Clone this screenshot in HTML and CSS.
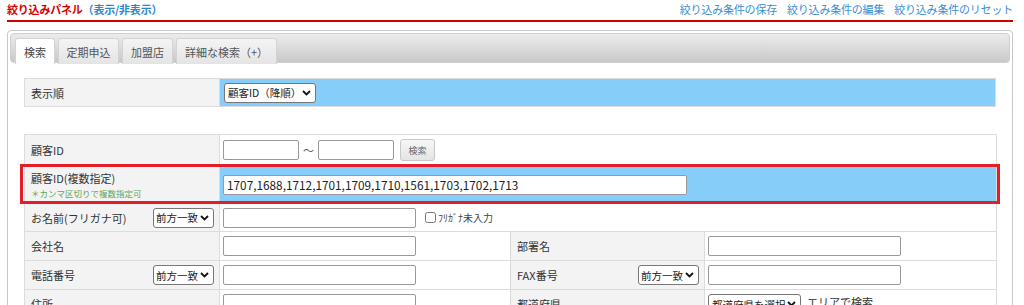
FILE: index.html
```html
<!DOCTYPE html>
<html lang="ja">
<head>
<meta charset="utf-8">
<title>絞り込みパネル</title>
<link rel="stylesheet" href="styles.css">
</head>
<body>
<header class="top">
  <div class="title">絞り込みパネル<span class="toggle">（表示/非表示）</span></div>
  <nav class="links">
    <a>絞り込み条件の保存</a>
    <a>絞り込み条件の編集</a>
    <a>絞り込み条件のリセット</a>
  </nav>
</header>
<div class="panel">
  <ul class="tabs">
    <li class="tab active w1">検索</li>
    <li class="tab w2">定期申込</li>
    <li class="tab w3">加盟店</li>
    <li class="tab w4">詳細な検索（+）</li>
  </ul>
  <div class="tab-body">
    <table class="t1">
      <tr>
        <th class="lab">表示順</th>
        <td class="blue"><select class="sel sort"><option>顧客ID（降順）</option></select></td>
      </tr>
    </table>
    <div class="t2wrap">
      <table class="t2">
        <colgroup><col class="c1"><col class="c2"><col class="c3"><col class="c4"></colgroup>
        <tr class="r1">
          <th class="lab">顧客ID</th>
          <td colspan="3" class="val">
            <input class="inp short" type="text"><span class="tilde">～</span><input class="inp short" type="text"><button class="btn">検索</button>
          </td>
        </tr>
        <tr class="r2">
          <th class="lab">顧客ID(複数指定)<div class="note">＊カンマ区切りで複数指定可</div></th>
          <td colspan="3" class="val blue"><input class="inp long" type="text" value="1707,1688,1712,1701,1709,1710,1561,1703,1702,1713"></td>
        </tr>
        <tr class="r3">
          <th class="lab"><div class="labflex"><span>お名前(フリガナ可)</span><select class="sel mode"><option>前方一致</option></select></div></th>
          <td colspan="3" class="val"><input class="inp mid" type="text"><label class="chk"><input type="checkbox">ﾌﾘｶﾞﾅ未入力</label></td>
        </tr>
        <tr class="r4">
          <th class="lab">会社名</th>
          <td class="val"><input class="inp mid" type="text"></td>
          <th class="lab">部署名</th>
          <td class="val"><input class="inp mid" type="text"></td>
        </tr>
        <tr class="r5">
          <th class="lab"><div class="labflex"><span>電話番号</span><select class="sel mode"><option>前方一致</option></select></div></th>
          <td class="val"><input class="inp mid" type="text"></td>
          <th class="lab"><div class="labflex"><span>FAX番号</span><select class="sel mode"><option>前方一致</option></select></div></th>
          <td class="val"><input class="inp mid" type="text"></td>
        </tr>
        <tr class="r6">
          <th class="lab">住所</th>
          <td class="val"><input class="inp mid" type="text"></td>
          <th class="lab">都道府県</th>
          <td class="val"><select class="sel pref"><option>都道府県を選択</option></select><span class="area">エリアで検索</span></td>
        </tr>
      </table>
      <div class="redbox"></div>
    </div>
  </div>
</div>
</body>
</html>
```
FILE: styles.css
```css
* { box-sizing: border-box; }
html, body { margin: 0; padding: 0; background: #fff; }
body {
  font-family: "Noto Sans CJK JP", "Noto Sans", sans-serif;
  font-size: 11px;
  color: #333;
  width: 1024px;
  padding: 0 11px 0 7px;
}
.top {
  display: flex;
  justify-content: space-between;
  align-items: center;
  height: 22px;
  padding-bottom: 2px;
  border-bottom: 2px solid #d40000;
}
.title {
  font-weight: bold;
  color: #d40000;
  font-size: 11px;
  letter-spacing: -0.2px;
}
.toggle { color: #2f87c8; }
.links { display: flex; gap: 10px; }
.links a { color: #3d8fd2; font-size: 11px; letter-spacing: -0.2px; }

.panel {
  margin-top: 8px;
  border: 1px solid #c8c8c8;
  border-radius: 4px;
  padding: 2px;
  height: 300px;
}
.tabs {
  list-style: none;
  margin: 0;
  padding: 4px 4px 0 4px;
  height: 30px;
  display: flex;
  gap: 3px;
  border: 1px solid #cfcfcf;
  border-radius: 4px;
  background: linear-gradient(#ececec, #c9c9c9);
}
.tab {
  height: 26px;
  display: flex;
  align-items: center;
  justify-content: center;
  color: #555;
  font-size: 11px;
  border: 1px solid #d3d3d3;
  border-bottom: none;
  border-radius: 3px 3px 0 0;
  background: linear-gradient(#f4f4f4, #e4e4e4);
}
.tab.active { background: #fff; color: #444; }
.w1 { width: 40px; }
.w2 { width: 61px; }
.w3 { width: 51px; }
.w4 { width: 101px; }

.tab-body { padding: 15px 14px 0 14px; }

table { border-collapse: collapse; width: 972px; table-layout: fixed; }
th, td { border: 1px solid #dcdcdc; }
th.lab {
  background: #f2f3f2;
  font-weight: normal;
  text-align: left;
  padding: 0 5px 0 6px;
  color: #333;
}
.t1 tr { height: 28px; }
.t1 th.lab { width: 195px; }
.t1 td { padding: 0 4px; }
.blue { background: #87cdf9; }
.sel {
  appearance: none;
  -webkit-appearance: none;
  font-family: "Noto Sans CJK JP", "Noto Sans", sans-serif;
  font-size: 10.5px;
  height: 20px;
  color: #222;
  border: 1px solid #777;
  border-radius: 3px;
  background: #fff url("data:image/svg+xml,%3Csvg xmlns='http://www.w3.org/2000/svg' width='9' height='6' viewBox='0 0 9 6'%3E%3Cpath d='M1 1l3.5 3.5L8 1' fill='none' stroke='%23111' stroke-width='1.8'/%3E%3C/svg%3E") no-repeat right 4px center;
  padding: 0 14px 0 3px;
  vertical-align: middle;
}
.sort { width: 92px; }
.mode { width: 61px; padding-left: 2px; }
.pref { width: 93px; }

.t2wrap { position: relative; margin-top: 27px; }
.c1 { width: 195px; }
.c2 { width: 291px; }
.c3 { width: 194px; }
.c4 { width: 292px; }
.val { padding: 0 3px; }
.r1 { height: 31px; }
.r2 { height: 38px; }
.r3 { height: 28px; }
.r4 { height: 29px; }
.r5 { height: 29px; }
.r6 { height: 29px; }
.note { color: #62a55a; font-size: 8.5px; margin-top: 1px; }
.labflex { display: flex; justify-content: space-between; align-items: center; }
.inp {
  font-family: "Noto Sans CJK JP", "Noto Sans", sans-serif;
  height: 20px;
  border: 1px solid #999;
  border-radius: 2px;
  padding: 0 3px;
  vertical-align: middle;
  background: #fff;
}
.short { width: 76px; }
.mid { width: 193px; }
.long { width: 464px; font-size: 11.8px; color: #222; }
.tilde { display: inline-block; width: 19px; text-align: center; vertical-align: middle; color: #555; }
.btn {
  margin-left: 6px;
  width: 35px;
  height: 22px;
  font-size: 9px;
  color: #666;
  border: 1px solid #c8c8c8;
  border-radius: 3px;
  background: linear-gradient(#f7f7f7, #e4e4e4);
  vertical-align: middle;
  font-family: "Noto Sans CJK JP", sans-serif;
}
.chk { display: inline-flex; align-items: center; margin-left: 9px; font-size: 10px; vertical-align: middle; color: #444; }
.chk input { width: 11px; height: 11px; margin: 0 2px 0 0; }
.area { margin-left: 6px; }
.redbox {
  position: absolute;
  left: -4px;
  top: 30px;
  width: 980px;
  height: 40px;
  border: 3px solid #e41e26;
  pointer-events: none;
}
```
